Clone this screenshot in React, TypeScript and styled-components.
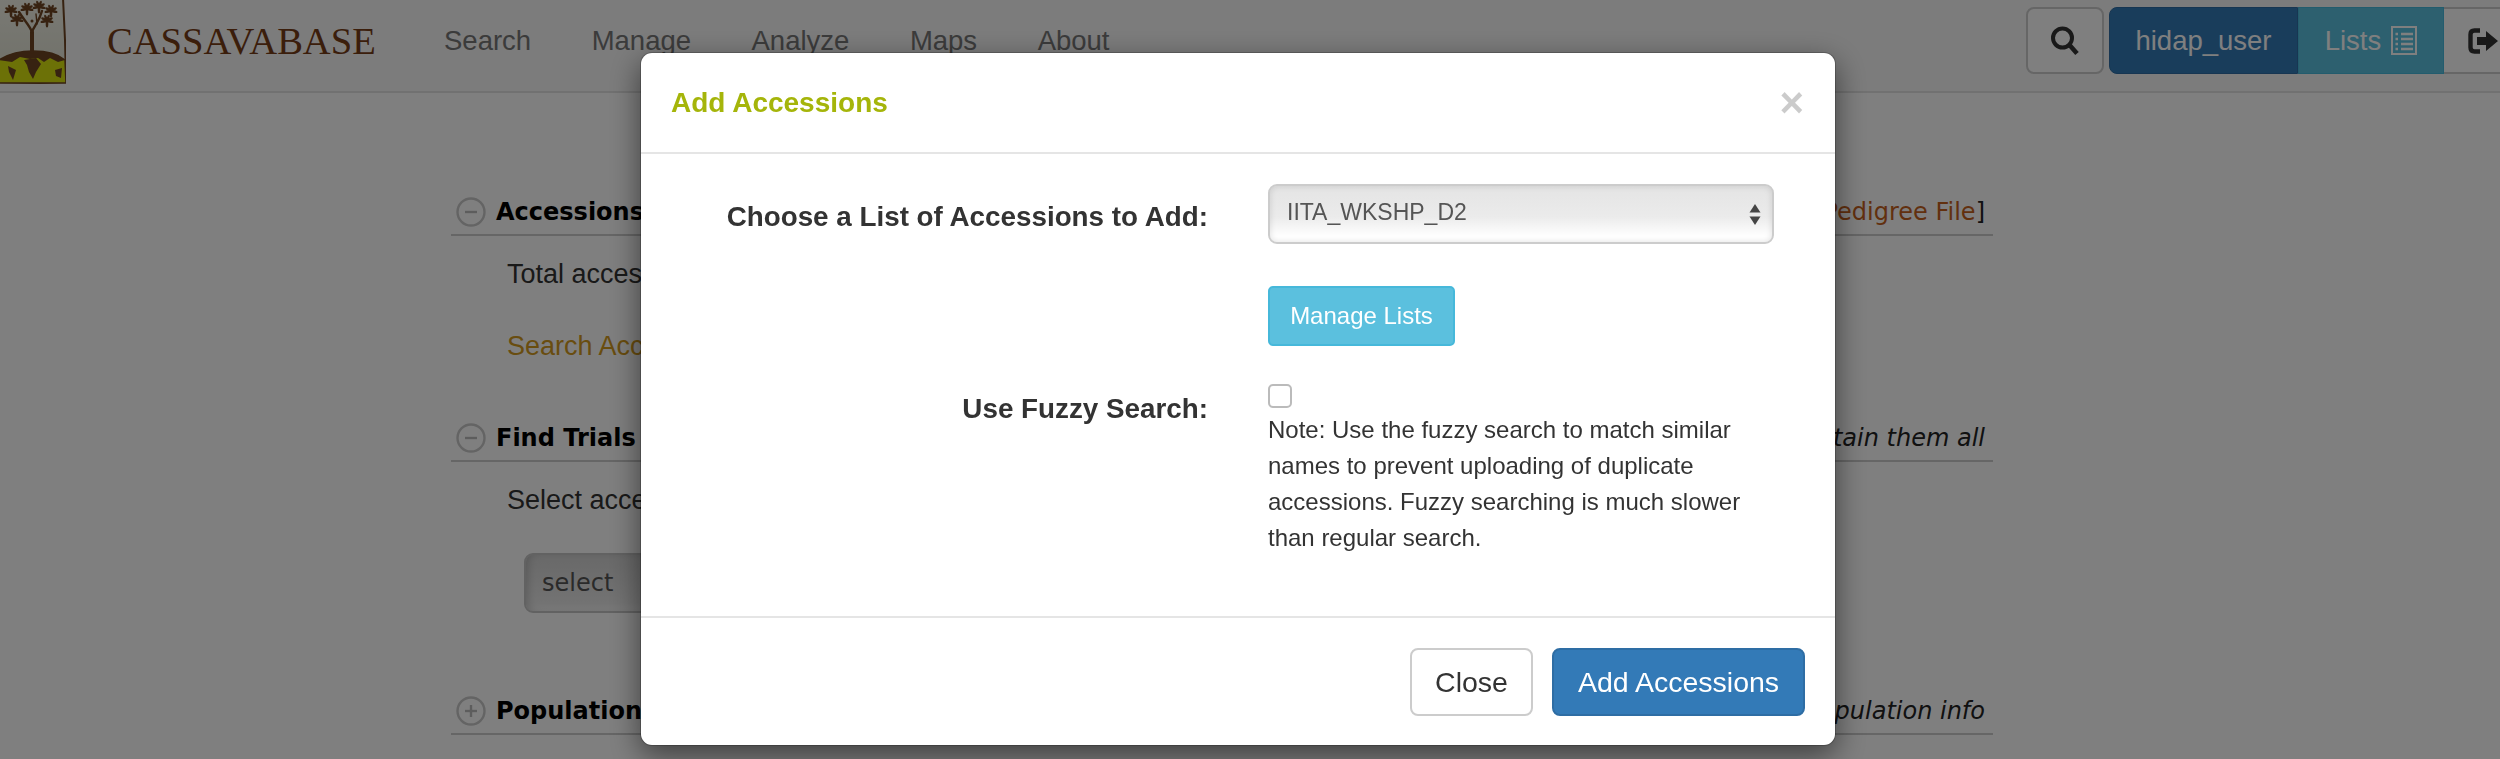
import React from "react";
import styled, { createGlobalStyle } from "styled-components";

const Global = createGlobalStyle`
  html, body { margin: 0; padding: 0; height: 759px; overflow: hidden; background: #fff; }
  * { box-sizing: border-box; }
  body { font-family: "Liberation Sans", Arial, sans-serif; color: #333; }
`;

const Page = styled.div`width: 2500px; height: 759px; overflow: hidden;`;

const TopBar = styled.header`
  display: flex; align-items: flex-start; height: 93px;
  background: #f8f8f8; border-bottom: 2px solid #e2e2e2;
`;
const LogoBox = styled.svg`display: block; width: 66px; height: 84px; flex: none;`;
const Brand = styled.div`
  margin-left: 41px; margin-top: 16px; width: 337px; flex: none;
  font: 38.6px/50px "Liberation Serif", serif; color: #763c16;
`;
const Nav = styled.nav`display: flex; gap: 60.5px; flex: 1; padding-top: 20px;`;
const NavItem = styled.a`font-size: 27.5px; line-height: 42px; color: #777;`;
const Tools = styled.div`display: flex; width: 474px; flex: none; overflow: hidden; padding-top: 7px;`;
const IconBtn = styled.div<{ $w: number }>`
  flex: none; width: ${(p) => p.$w}px; height: 67px; display: flex; align-items: center;
  background: #fff; border: 2px solid #ccc; border-radius: 8px; color: #333;
`;
const SearchBtn = styled(IconBtn)`justify-content: center; margin-right: 5px;`;
const LogoutBtn = styled(IconBtn)`border-radius: 0; border-left: none; padding-left: 24px;`;
const UserBtn = styled.div`
  flex: none; width: 189px; height: 67px; display: flex; align-items: center; justify-content: center;
  background: #337ab7; border: 1px solid #2e6da4; border-radius: 8px 0 0 8px;
  color: #fff; font-size: 27.5px;
`;
const ListsBtn = styled.div`
  flex: none; width: 146px; height: 67px; display: flex; align-items: center; justify-content: center; gap: 10px;
  background: #5bc0de; border: 1px solid #46b8da; color: #fff; font-size: 27.5px;
`;

const Main = styled.main`width: 1542px; margin-left: 451px; padding-top: 97px;`;
const SectionHead = styled.div`
  display: flex; align-items: center; height: 46px; padding-left: 5px;
  border-bottom: 2px solid #ccc;
  font-family: "DejaVu Sans", Verdana, sans-serif; font-size: 24px;
`;
const Toggle = styled.svg`flex: none; width: 30px; height: 30px; margin-right: 10px;`;
const HeadTitle = styled.span`font-weight: 700; color: #000; flex: 1; white-space: nowrap;`;
const HeadNote = styled.span`padding-right: 8px; color: #222; white-space: nowrap;`;
const HeadNoteItalic = styled(HeadNote)`font-style: italic;`;
const HeadLink = styled.a`color: #c4601c;`;
const Body = styled.div<{ $h: number }>`height: ${(p) => p.$h}px; padding-left: 56px; padding-top: 19px;`;
const Row = styled.div`width: fit-content; font-size: 27px; line-height: 38px; color: #333; margin-bottom: 34px;`;
const GoldLink = styled.a`color: #d29a1e;`;
const FakeSelect = styled.div`
  width: 400px; height: 60px; margin-left: 17px; padding-left: 16px;
  display: flex; align-items: center;
  font-family: "DejaVu Sans", sans-serif; font-size: 24px; color: #555; border: 2px solid #c4c4c4; border-radius: 9px;
  background: linear-gradient(#d2d2d2, #e6e6e6 85%, #f2f2f2);
  box-shadow: inset 6px 0 8px -4px rgba(0,0,0,.18);
`;

const Backdrop = styled.div`
  position: fixed; inset: 0; background: rgba(0,0,0,.5);
  padding: 52px 0 0 640px;
`;
const Modal = styled.section`
  width: 1196px; height: 694px; background: #fff; border-radius: 12px;
  border: 1px solid rgba(0,0,0,.2); box-shadow: 0 10px 30px rgba(0,0,0,.5);
  background-clip: padding-box; display: flex; flex-direction: column;
`;
const ModalHead = styled.div`
  height: 101px; flex: none; display: flex; align-items: center; justify-content: space-between;
  padding: 0 31px 0 30px; border-bottom: 2px solid #e5e5e5;
`;
const ModalTitle = styled.h4`margin: 0; font-size: 28px; font-weight: 700; color: #a5b50a;`;
const CloseX = styled.span`
  font-size: 42px; font-weight: 700; line-height: 42px; color: #000; opacity: .2;
`;
const ModalBody = styled.div`
  flex: 1; padding-top: 30px;
  display: grid; grid-template-columns: 567px 506px; column-gap: 60px; align-content: start;
`;
const FieldLabel = styled.label<{ $top: number }>`
  display: block; text-align: right; font-size: 27.8px; font-weight: 700; line-height: 40px; color: #333;
  padding-top: ${(p) => p.$top}px;
`;
const SelectWrap = styled.div`position: relative; width: 506px; height: 60px;`;
const ListSelect = styled.select`
  width: 100%; height: 100%; appearance: none; -webkit-appearance: none; outline: none;
  padding: 0 40px 4px 17px; font: 23px "Liberation Sans", sans-serif; color: #555;
  border: 2px solid #ccc; border-radius: 9px;
  background: linear-gradient(#e4e4e4, #ebebeb 55%, #fff 90%);
  box-shadow: inset 0 0 6px rgba(0,0,0,.12);
`;
const Arrows = styled.svg`position: absolute; right: 12px; top: 19px; width: 14px; height: 23px; pointer-events: none;`;
const Empty = styled.div``;
const ManageBtn = styled.button`
  display: block; margin-top: 42px; width: 187px; height: 60px;
  background: #5bc0de; border: 2px solid #46b8da; border-radius: 5px;
  color: #fff; font: 24px "Liberation Sans", sans-serif; padding: 0;
`;
const FuzzyCol = styled.div`margin-top: 38px;`;
const Check = styled.input`
  display: block; appearance: none; -webkit-appearance: none; margin: 0;
  width: 24px; height: 24px; border: 2px solid #bbb; border-radius: 5px; background: #fff;
`;
const Note = styled.div`margin-top: 4px; font-size: 24px; line-height: 36px; color: #333;`;
const ModalFoot = styled.div`
  flex: none; height: 129px; padding: 30px 30px 30px 0; display: flex; justify-content: flex-end; gap: 19px;
  border-top: 2px solid #e5e5e5;
`;
const FootBtn = styled.button`
  height: 68px; font: 28.5px "Liberation Sans", sans-serif; border-radius: 8px; padding: 0;
`;
const CloseBtn = styled(FootBtn)`width: 123px; background: #fff; border: 2px solid #ccc; color: #333;`;
const AddBtn = styled(FootBtn)`width: 253px; background: #337ab7; border: 2px solid #2e6da4; color: #fff;`;

const leaves: [number, number][] = [
  [11, 11], [27, 9], [39, 7], [51, 11], [17, 20], [47, 21],
];

const Logo = () => (
  <LogoBox viewBox="0 0 66 84">
    <defs>
      <linearGradient id="sky" x1="0" y1="0" x2="0" y2="1">
        <stop offset="0" stopColor="#f4f4ea" />
        <stop offset="1" stopColor="#dfe0d0" />
      </linearGradient>
    </defs>
    <path d="M-2 -2H63L65 40L66 82L40 83L-2 82Z" fill="url(#sky)" stroke="#6e4422" strokeWidth="2" />
    <path d="M-1 60C10 53 22 51 33 51C46 51 58 54 65 60L66 83H-1Z" fill="#d8e20e" stroke="#6e4422" strokeWidth="1.5" />
    <path d="M-1 60C10 53 22 51 33 51C46 51 58 54 65 60L58 62L50 58L44 62L38 58L30 59L20 57L12 62Z" fill="#6e4422" />
    <path d="M24 60L36 58L41 64L36 72L33 79L29 72L27 65Z M8 66L16 70L13 80L9 72Z M55 70L62 68L61 78L56 76Z" fill="#6e4422" />
    <g fill="none" stroke="#6e4422" strokeLinecap="round">
      <path d="M32 52V32" strokeWidth="4" />
      <path d="M32 32C30 26 24 20 19 12" strokeWidth="2.4" />
      <path d="M32 32C34 26 39 22 42 11" strokeWidth="2.4" />
      <path d="M37 24L36 14" strokeWidth="1.4" />
    </g>
    <circle cx="32" cy="21" r="1.5" fill="#6e4422" />
    {leaves.map(([x, y]) => (
      <g key={`${x}-${y}`} transform={`translate(${x} ${y})`} fill="#6e4422">
        {[-100, -60, -20, 20, 60, 100, 180].map((a) => (
          <ellipse key={a} cx="0" cy="-3" rx="1.3" ry="3.6" transform={`rotate(${a})`} />
        ))}
      </g>
    ))}
  </LogoBox>
);

const ToggleIcon = ({ plus }: { plus?: boolean }) => (
  <Toggle viewBox="0 0 30 30" fill="none" stroke="#c9c9c9" strokeWidth="2.4">
    <circle cx="15" cy="15" r="13.5" />
    <path d="M9 15H21" stroke="#bbb" />
    {plus && <path d="M15 9V21" stroke="#bbb" />}
  </Toggle>
);

export default function App() {
  return (
    <Page>
      <Global />
      <TopBar>
        <Logo />
        <Brand>CASSAVABASE</Brand>
        <Nav>
          <NavItem>Search</NavItem>
          <NavItem>Manage</NavItem>
          <NavItem>Analyze</NavItem>
          <NavItem>Maps</NavItem>
          <NavItem>About</NavItem>
        </Nav>
        <Tools>
          <SearchBtn $w={78}>
            <svg width="30" height="32" viewBox="0 0 30 32" fill="none" stroke="#333">
              <circle cx="12.5" cy="13" r="9.5" strokeWidth="4" />
              <path d="M19.5 20L27 28.5" strokeWidth="4.6" />
            </svg>
          </SearchBtn>
          <UserBtn>hidap_user</UserBtn>
          <ListsBtn>
            Lists
            <svg width="26" height="29" viewBox="0 0 26 29" fill="none" stroke="#fff">
              <rect x="1" y="1" width="24" height="27" strokeWidth="2" />
              <path d="M4.5 8H7M10 8H22M4.5 13H7M10 13H22M4.5 18H7M10 18H22M4.5 23H7M10 23H22" strokeWidth="2.4" />
            </svg>
          </ListsBtn>
          <LogoutBtn $w={80}>
            <svg width="40" height="26" viewBox="0 0 40 26" fill="none">
              <path d="M12 2.5H6.5Q2.5 2.5 2.5 6.5V19.5Q2.5 23.5 6.5 23.5H12" stroke="#333" strokeWidth="4.4" />
              <path d="M9 9H18V3L30 13L18 23V17H9Z" fill="#333" />
            </svg>
          </LogoutBtn>
        </Tools>
      </TopBar>
      <Main>
        <SectionHead>
          <ToggleIcon />
          <HeadTitle>Accessions</HeadTitle>
          <HeadNote>[<HeadLink>Upload Pedigree File</HeadLink>]</HeadNote>
        </SectionHead>
        <Body $h={180}>
          <Row>Total accessions</Row>
          <Row><GoldLink>Search Accessions</GoldLink></Row>
        </Body>
        <SectionHead>
          <ToggleIcon />
          <HeadTitle>Find Trials</HeadTitle>
          <HeadNoteItalic>Find the trials that contain them all</HeadNoteItalic>
        </SectionHead>
        <Body $h={227}>
          <Row>Select accessions</Row>
          <FakeSelect>select</FakeSelect>
        </Body>
        <SectionHead>
          <ToggleIcon plus />
          <HeadTitle>Population</HeadTitle>
          <HeadNoteItalic>Accession population info</HeadNoteItalic>
        </SectionHead>
      </Main>
      <Backdrop>
        <Modal>
          <ModalHead>
            <ModalTitle>Add Accessions</ModalTitle>
            <CloseX>×</CloseX>
          </ModalHead>
          <ModalBody>
            <FieldLabel $top={13}>Choose a List of Accessions to Add:</FieldLabel>
            <SelectWrap>
              <ListSelect defaultValue="IITA_WKSHP_D2">
                <option>IITA_WKSHP_D2</option>
              </ListSelect>
              <Arrows viewBox="0 0 14 23" fill="#444">
                <path d="M7 1L12.5 9.5H1.5Z" />
                <path d="M7 22L12.5 13.5H1.5Z" />
              </Arrows>
            </SelectWrap>
            <Empty />
            <ManageBtn>Manage Lists</ManageBtn>
            <FieldLabel $top={43}>Use Fuzzy Search:</FieldLabel>
            <FuzzyCol>
              <Check type="checkbox" />
              <Note>
                Note: Use the fuzzy search to match similar names to prevent uploading of duplicate accessions. Fuzzy searching is much slower than regular search.
              </Note>
            </FuzzyCol>
          </ModalBody>
          <ModalFoot>
            <CloseBtn>Close</CloseBtn>
            <AddBtn>Add Accessions</AddBtn>
          </ModalFoot>
        </Modal>
      </Backdrop>
    </Page>
  );
}
